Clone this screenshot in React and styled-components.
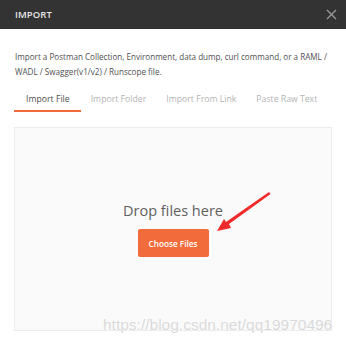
import React from "react";
import styled, { createGlobalStyle } from "styled-components";

const Global = createGlobalStyle`
  html, body {
    margin: 0;
    padding: 0;
    background: #ffffff;
  }
  body {
    font-family: "Open Sans", "Liberation Sans", sans-serif;
  }
`;

const Dialog = styled.div`
  position: relative;
  width: 346px;
  height: 346px;
  background: #fff;
  display: flex;
  flex-direction: column;
  overflow: hidden;
`;

const Header = styled.div`
  height: 29px;
  background: #333333;
  display: flex;
  align-items: center;
  justify-content: space-between;
  padding: 0 8px 0 15px;
`;

const Title = styled.span`
  color: #e6e6e6;
  font-size: 9.5px;
  font-weight: 600;
  letter-spacing: 0.1px;
`;

const Close = styled.button`
  border: 0;
  background: none;
  padding: 0;
  width: 14px;
  height: 14px;
  display: flex;
  align-items: center;
  justify-content: center;
`;

const Body = styled.div`
  padding: 20px 14px 0 14px;
  display: flex;
  flex-direction: column;
`;

const Description = styled.p`
  margin: 0 0 0 1px;
  font-size: 8.1px;
  line-height: 15px;
  color: #505050;
`;

const Tabs = styled.div`
  display: flex;
  margin-top: 9px;
`;

const Tab = styled.div`
  flex-shrink: 0;
  white-space: nowrap;
  height: 24px;
  padding: 0 ${p => (p.active ? "11px 0 12px" : "10px 0 10px")};
  display: flex;
  align-items: center;
  font-size: 8.7px;
  color: ${p => (p.active ? "#505050" : "#b3b3b3")};
  border-bottom: 2px solid ${p => (p.active ? "#f26b3a" : "transparent")};
  box-sizing: border-box;
`;

const DropArea = styled.div`
  position: relative;
  margin-top: 15px;
  height: 204px;
  background: #fafafa;
  border: 1px solid #ececec;
  box-sizing: border-box;
  display: flex;
  flex-direction: column;
  align-items: center;
  justify-content: center;
`;

const DropText = styled.div`
  font-size: 14.5px;
  color: #606060;
`;

const ChooseButton = styled.button`
  margin-top: 9px;
  width: 71px;
  height: 28px;
  border: 0;
  border-radius: 2px;
  background: #f26b3a;
  color: #fff;
  font-family: "Open Sans", "Liberation Sans", sans-serif;
  font-size: 8.2px;
  font-weight: 600;
`;

const Arrow = styled.svg`
  position: absolute;
  left: 0;
  top: 0;
  pointer-events: none;
`;

const Watermark = styled.div`
  position: absolute;
  left: 103px;
  top: 316px;
  font-family: "Liberation Sans", Arial, sans-serif;
  font-size: 15.5px;
  color: rgba(205, 205, 205, 0.75);
  text-shadow: 0 0 1px #fff;
  white-space: nowrap;
`;

const tabs = [
  { label: "Import File", active: true },
  { label: "Import Folder" },
  { label: "Import From Link" },
  { label: "Paste Raw Text" },
];

export default function App() {
  return (
    <>
      <Global />
      <Dialog>
        <Header>
          <Title>IMPORT</Title>
          <Close>
            <svg width="11" height="11" viewBox="0 0 11 11">
              <path d="M1 1 L10 10 M10 1 L1 10" stroke="#9a9a9a" strokeWidth="1.3" />
            </svg>
          </Close>
        </Header>
        <Body>
          <Description>
            Import a Postman Collection, Environment, data dump, curl command, or a RAML /
            WADL / Swagger(v1/v2) / Runscope file.
          </Description>
          <Tabs>
            {tabs.map(t => (
              <Tab key={t.label} active={t.active}>
                {t.label}
              </Tab>
            ))}
          </Tabs>
          <DropArea>
            <DropText>Drop files here</DropText>
            <ChooseButton>Choose Files</ChooseButton>
          </DropArea>
        </Body>
        <Arrow width="346" height="346" viewBox="0 0 346 346">
          <polygon points="269,192 270.5,194 229,224 231,228 217,231 224,219 226,222" fill="#ee2a2a" />
        </Arrow>
        <Watermark>https://blog.csdn.net/qq19970496</Watermark>
      </Dialog>
    </>
  );
}
